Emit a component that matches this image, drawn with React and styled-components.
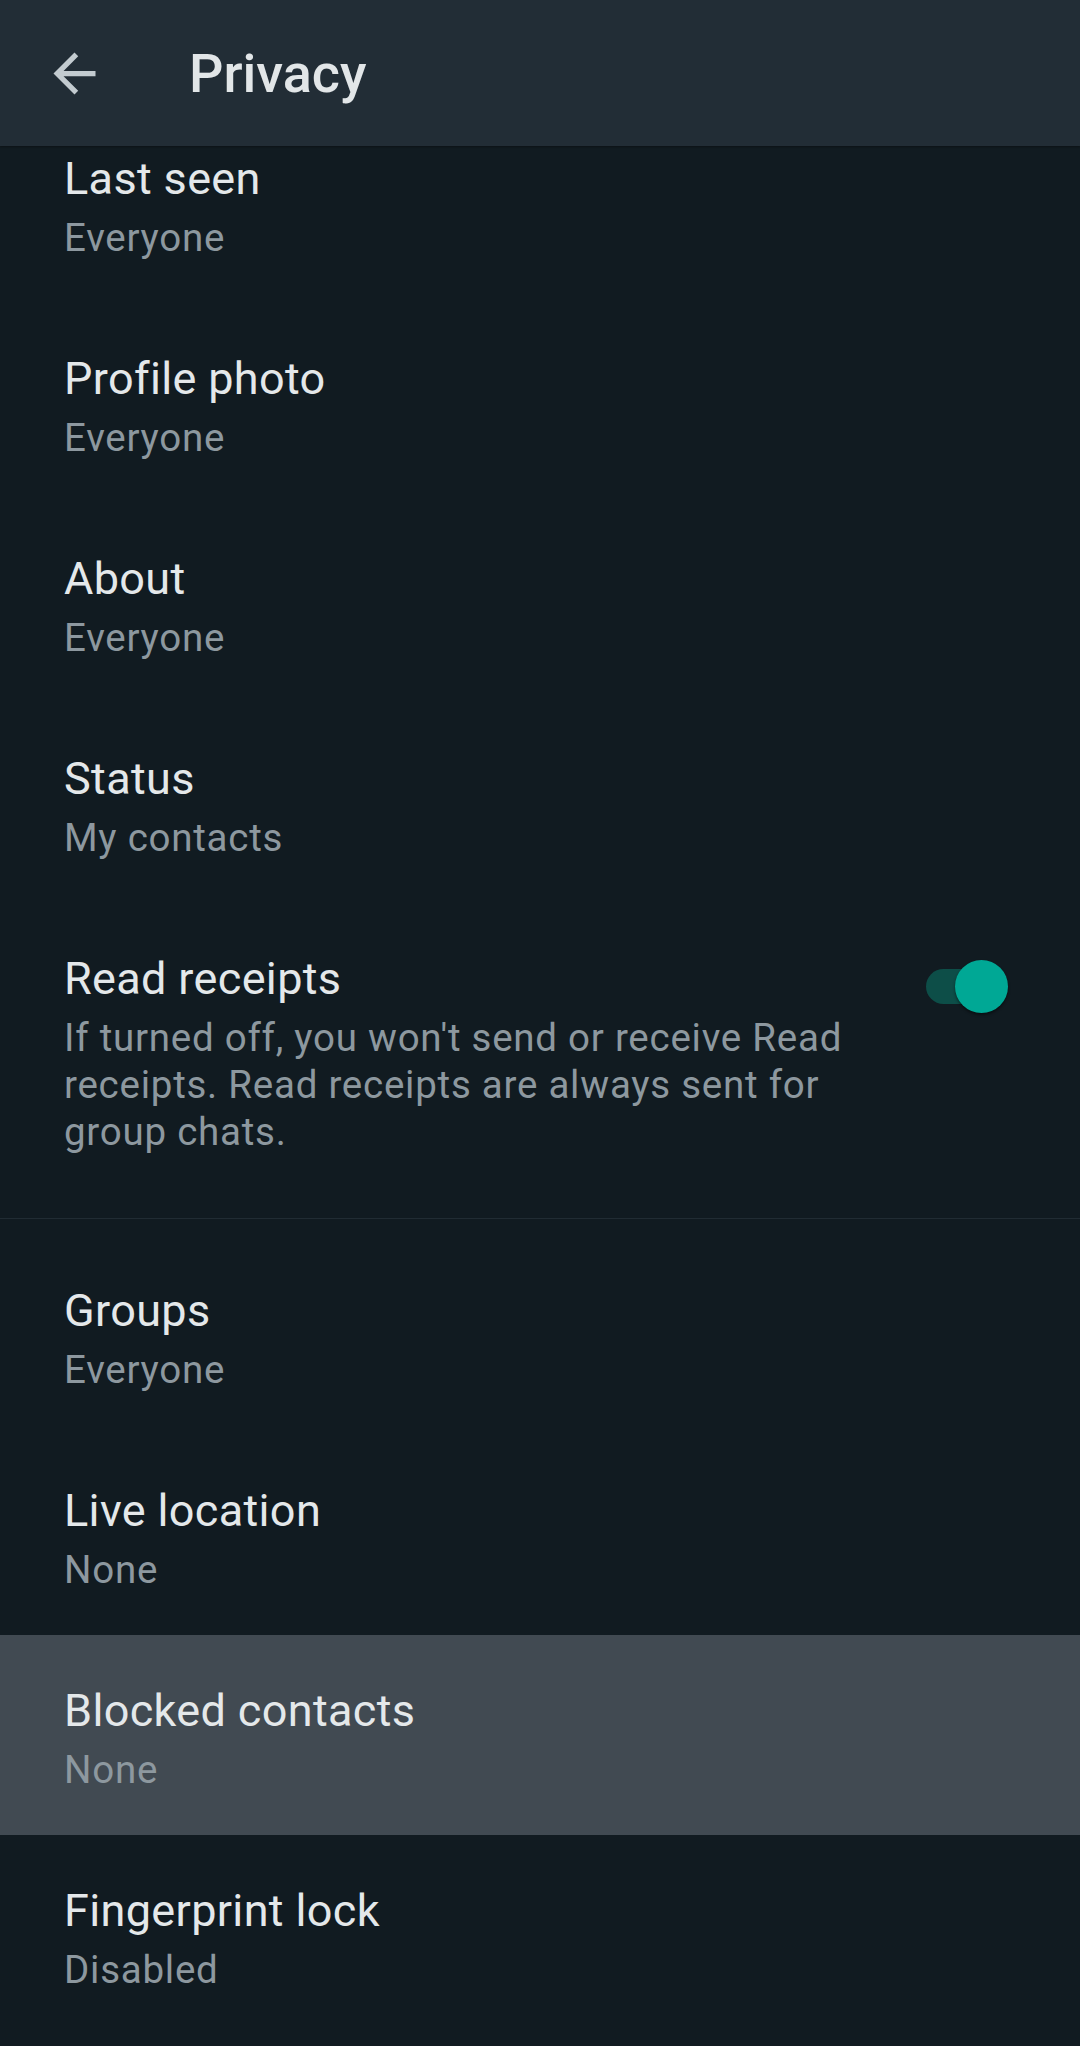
import React from 'react'
import styled, { createGlobalStyle } from 'styled-components'

const GlobalStyle = createGlobalStyle`
  html, body {
    margin: 0;
    padding: 0;
    background: #111b21;
  }
  body {
    font-family: Roboto, 'Liberation Sans', sans-serif;
    -webkit-font-smoothing: antialiased;
  }
`

const Screen = styled.div`
  width: 1080px;
  height: 2046px;
  overflow: hidden;
  background: #111b21;
`

const Header = styled.header`
  position: relative;
  z-index: 1;
  display: flex;
  align-items: center;
  height: 146px;
  padding-left: 42px;
  box-sizing: border-box;
  background: #222d36;
  box-shadow: 0 1px 2px rgba(0, 0, 0, 0.35);
`

const BackButton = styled.button`
  display: flex;
  align-items: center;
  justify-content: center;
  width: 64px;
  height: 64px;
  padding: 0;
  border: none;
  background: none;
  color: #c3cbd0;
  cursor: pointer;
`

const Title = styled.h1`
  margin: 0 0 0 83px;
  font-size: 54px;
  font-weight: 500;
  color: #e2e6e8;
`

const List = styled.div`
  margin-top: -43px;
`

const Row = styled.div`
  display: flex;
  align-items: flex-start;
  gap: 46px;
  padding: 44px 72px 42px 64px;
  background: ${p => (p.highlighted ? '#414a52' : 'transparent')};
`

const Text = styled.div`
  flex: 1;
  min-width: 0;
`

const Label = styled.div`
  font-size: 45px;
  line-height: 64px;
  letter-spacing: 0.35px;
  color: #e4e8ea;
`

const Sub = styled.div`
  margin-top: 3px;
  font-size: 38.5px;
  line-height: 47px;
  letter-spacing: 0.75px;
  color: #8d989f;
`

const Divider = styled.hr`
  margin: 21px 0 16px;
  border: none;
  height: 1px;
  background: #212c33;
`

const Switch = styled.div`
  position: relative;
  flex: none;
  width: 82px;
  height: 53px;
  margin-top: 13px;
`

const Track = styled.span`
  position: absolute;
  left: 0;
  top: 9px;
  width: 74px;
  height: 35px;
  border-radius: 18px;
  background: ${p => (p.on ? '#0d4e48' : '#3b4a54')};
`

const Thumb = styled.span`
  position: absolute;
  top: 0;
  right: ${p => (p.on ? '0' : 'auto')};
  left: ${p => (p.on ? 'auto' : '-8px')};
  width: 53px;
  height: 53px;
  border-radius: 50%;
  background: ${p => (p.on ? '#00a895' : '#b9c1c6')};
  box-shadow: 0 2px 3px rgba(0, 0, 0, 0.45);
`

const ArrowBack = () => (
  <svg width="63" height="63" viewBox="0 0 24 24" fill="currentColor">
    <path d="M20 11H7.83l5.59-5.59L12 4l-8 8 8 8 1.41-1.41L7.83 13H20v-2z" />
  </svg>
)

const firstSection = [
  { label: 'Last seen', value: 'Everyone' },
  { label: 'Profile photo', value: 'Everyone' },
  { label: 'About', value: 'Everyone' },
  { label: 'Status', value: 'My contacts' },
]

const secondSection = [
  { label: 'Groups', value: 'Everyone' },
  { label: 'Live location', value: 'None' },
  { label: 'Blocked contacts', value: 'None', highlighted: true },
  { label: 'Fingerprint lock', value: 'Disabled' },
]

const SettingRow = ({ label, value, highlighted, toggle }) => (
  <Row highlighted={highlighted}>
    <Text>
      <Label>{label}</Label>
      <Sub>{value}</Sub>
    </Text>
    {toggle !== undefined && (
      <Switch role="switch" aria-checked={toggle}>
        <Track on={toggle} />
        <Thumb on={toggle} />
      </Switch>
    )}
  </Row>
)

export default function App() {
  return (
    <Screen>
      <GlobalStyle />
      <Header>
        <BackButton aria-label="Back">
          <ArrowBack />
        </BackButton>
        <Title>Privacy</Title>
      </Header>
      <List>
        {firstSection.map(item => (
          <SettingRow key={item.label} {...item} />
        ))}
        <SettingRow
          label="Read receipts"
          value="If turned off, you won't send or receive Read receipts. Read receipts are always sent for group chats."
          toggle
        />
        <Divider />
        {secondSection.map(item => (
          <SettingRow key={item.label} {...item} />
        ))}
      </List>
    </Screen>
  )
}
